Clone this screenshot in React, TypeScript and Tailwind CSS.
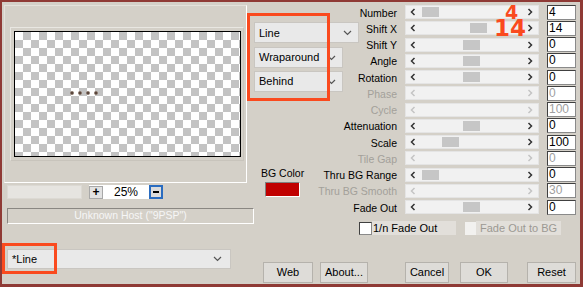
import React from 'react';

type Row = { label: string; thumb?: number; value: string; disabled?: boolean };

const rows: Row[] = [
  { label: 'Number', thumb: 17, value: '4' },
  { label: 'Shift X', thumb: 65, value: '14' },
  { label: 'Shift Y', thumb: 58, value: '0' },
  { label: 'Angle', thumb: 58, value: '0' },
  { label: 'Rotation', thumb: 58, value: '0' },
  { label: 'Phase', value: '0', disabled: true },
  { label: 'Cycle', value: '100', disabled: true },
  { label: 'Attenuation', thumb: 58, value: '0' },
  { label: 'Scale', thumb: 37, value: '100' },
  { label: 'Tile Gap', value: '0', disabled: true },
  { label: 'Thru BG Range', thumb: 17, value: '0' },
  { label: 'Thru BG Smooth', value: '30', disabled: true },
  { label: 'Fade Out', thumb: 58, value: '0' },
];

const rowStart = [
  'row-start-1', 'row-start-2', 'row-start-3', 'row-start-4', 'row-start-5', 'row-start-6', 'row-start-7',
  'row-start-8', 'row-start-9', 'row-start-10', 'row-start-11', 'row-start-12', 'row-start-13',
];

function Chevron({ className = '' }: { className?: string }) {
  return (
    <svg width="9" height="6" viewBox="0 0 9 6" className={className}>
      <path d="M1 1 L4.5 4.5 L8 1" fill="none" stroke="#555" strokeWidth="1.2" />
    </svg>
  );
}

function Dropdown({ text, className }: { text: string; className: string }) {
  return (
    <div className={`flex items-center justify-between bg-[#e9e9e9] border border-[#c9c6c1] pl-[4px] pr-[6px] text-[11px] ${className}`}>
      <span>{text}</span>
      <Chevron />
    </div>
  );
}

function Arrow({ dir, disabled }: { dir: 'l' | 'r'; disabled?: boolean }) {
  return (
    <svg width="6" height="8" viewBox="0 0 6 8">
      <path
        d={dir === 'l' ? 'M4.5 1 L1.5 4 L4.5 7' : 'M1.5 1 L4.5 4 L1.5 7'}
        fill="none"
        stroke={disabled ? '#c4c4c4' : '#333'}
        strokeWidth="1.5"
      />
    </svg>
  );
}

function Button({ children, className }: { children: React.ReactNode; className: string }) {
  return (
    <div className={`h-[21px] flex items-center justify-center bg-[#dedcd8] border border-[#b5b2ac] text-[11px] ${className}`}>
      {children}
    </div>
  );
}

function Dot() {
  return <div className="w-[4px] h-[4px] rounded-full bg-[radial-gradient(circle,#5a463c_30%,#c4b2a4_95%)]" />;
}

export default function App() {
  return (
    <div className="relative w-[583px] h-[287px] bg-[#d4d0c8] border-[#8f3a35] border-t-2 border-l-2 border-r-[3px] border-b-[3px] flex overflow-hidden text-black font-['Liberation_Sans',Arial,sans-serif]">
      {/* Left column */}
      <div className="w-[252px] flex flex-col shrink-0">
        <div className="ml-[2px] mt-[3px] w-[243px] h-[178px] border border-t-[#e4e1db] border-l-[#e4e1db] border-b-white border-r-white">
          <div className="ml-[5px] mt-[21px] w-[234px] h-[134px] border border-t-[#e9e7e2] border-l-[#e9e7e2] border-b-[#c8c4bc] border-r-[#c8c4bc] pl-[3px] pt-[3px]">
            <div className="relative w-[227px] h-[126px] border border-black bg-[conic-gradient(#c3c3c3_25%,#ffffff_0_50%,#c3c3c3_0_75%,#ffffff_0)] bg-[length:16px_16px]">
              <div className="absolute left-[55px] top-[59px] flex gap-[4px]">
                <Dot />
                <Dot />
                <Dot />
                <Dot />
              </div>
            </div>
          </div>
        </div>

        {/* zoom row */}
        <div className="mt-[2px] flex items-center">
          <div className="ml-[5px] w-[75px] h-[14px] bg-[#e6e4e0] border border-[#dcd9d3]" />
          <div className="ml-[7px] w-[74px] h-[14px] bg-white flex items-center">
            <div className="w-[14px] h-[13px] bg-[#e2e2e2] border border-[#a8a8a8] flex items-center justify-center text-[12px] font-bold leading-none">+</div>
            <div className="flex-1 text-center text-[12px] leading-none">25%</div>
            <div className="w-[14px] h-[14px] border-2 border-[#2a6cc0] bg-[#dcdcdc] flex items-center justify-center">
              <div className="w-[6px] h-[1.5px] bg-black" />
            </div>
          </div>
        </div>

        {/* host bar */}
        <div className="mt-[9px] ml-[5px] w-[247px] h-[16px] border border-t-[#8a8782] border-l-[#8a8782] border-b-white border-r-white flex items-center justify-center text-[10.5px] text-[#f6f6f6]">
          Unknown Host ("9PSP")
        </div>

        <Dropdown text="*Line" className="mt-[25px] ml-[5px] w-[224px] h-[20px] pr-[8px]" />
      </div>

      {/* Right area */}
      <div className="flex-1 flex flex-col">
        <div className="mt-[2px] grid grid-cols-[143px_134px_29px] gap-x-[8px] grid-rows-[repeat(13,16.25px)]">
          {rows.map((r, i) => (
            <React.Fragment key={r.label}>
              <div className={`col-start-1 ${rowStart[i]} self-center justify-self-end whitespace-nowrap text-[10.5px] leading-[12px] mt-[1px] ${r.disabled ? 'text-[#a3a09a]' : 'text-black'}`}>
                {r.label}
              </div>
              <div className={`col-start-2 ${rowStart[i]} self-center relative h-[14px] bg-[#f1f1f1] border border-[#e4e4e4] flex items-center justify-between pl-[4px] pr-[5px]`}>
                <Arrow dir="l" disabled={r.disabled} />
                <Arrow dir="r" disabled={r.disabled} />
                {r.thumb !== undefined && (
                  <div className="absolute top-[1px] w-[17px] h-[10px] bg-[#c6c6c6]" style={{ left: r.thumb - 1 }} />
                )}
              </div>
              <div className={`col-start-3 ${rowStart[i]} self-center h-[15px] bg-white border border-[#8a8a8a] border-t-[#404040] border-l-[#404040] pl-[1px] text-[12px] leading-[13px] ${r.disabled ? 'text-[#a0a0a0]' : 'text-black'}`}>
                {r.value}
              </div>
            </React.Fragment>
          ))}

          <Dropdown text="Line" className="col-start-1 row-start-2 row-span-2 self-start justify-self-start mt-[2px] w-[105px] h-[21px]" />
          <Dropdown text="Wraparound" className="col-start-1 row-start-3 row-span-2 self-end justify-self-start mb-[1px] w-[89px] h-[21px]" />
          <Dropdown text="Behind" className="col-start-1 row-start-5 row-span-2 self-start justify-self-start mt-[2px] w-[89px] h-[21px]" />

          <div className="col-start-1 row-start-11 row-span-2 self-start justify-self-start ml-[7px] flex flex-col items-center">
            <div className="text-[10.5px] leading-[12px] whitespace-nowrap">BG Color</div>
            <div className="mt-[3px] w-[35px] h-[15px] bg-[#c00000] border border-t-[#808080] border-l-[#808080] border-b-white border-r-white" />
          </div>
        </div>

        {/* checkboxes */}
        <div className="mt-[6px] flex items-center pl-[105px] h-[14px]">
          <div className="w-[13px] h-[13px] bg-white border border-[#8a8a8a] border-t-[#404040] border-l-[#404040]" />
          <div className="h-[14px] w-[84px] bg-[#e2dfda] flex items-center pl-[1px] text-[11px]">1/n Fade Out</div>
          <div className="ml-[9px] w-[11px] h-[13px] bg-[#f2f1ef]" />
          <div className="h-[14px] w-[85px] bg-[#e2dfda] flex items-center pl-[4px] text-[11px] text-[#9c9993]">Fade Out to BG</div>
        </div>

        {/* buttons */}
        <div className="mt-auto mb-[1px] flex items-center">
          <Button className="ml-[9px] w-[50px]">Web</Button>
          <Button className="ml-[7px] w-[48px]">About...</Button>
          <Button className="ml-[37px] w-[44px]">Cancel</Button>
          <Button className="ml-[11px] w-[48px]">OK</Button>
          <Button className="ml-[19px] w-[49px]">Reset</Button>
        </div>
      </div>

      {/* annotations */}
      <div className="absolute left-[245px] top-[11px] w-[83px] h-[88px] border-[3px] border-[#fa4a1e]" />
      <div className="absolute left-0 top-[241px] w-[55px] h-[31px] border-[3px] border-[#fa4a1e]" />
      <div className="absolute left-[503px] top-[3px] text-[19px] leading-[14px] font-bold text-[#fa4a1e] font-['DejaVu_Sans',sans-serif]">4</div>
      <div className="absolute left-[492px] top-[18px] text-[23px] leading-[17px] font-bold text-[#fa4a1e] font-['DejaVu_Sans',sans-serif]">14</div>
    </div>
  );
}
